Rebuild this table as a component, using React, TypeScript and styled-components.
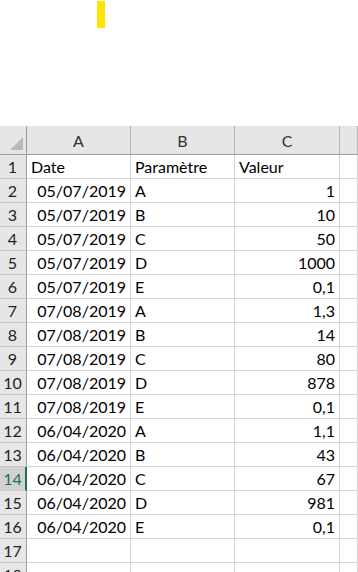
import React from 'react';
import styled, { createGlobalStyle } from 'styled-components';

const GlobalStyle = createGlobalStyle`
  html, body {
    margin: 0;
    padding: 0;
    background: #ffffff;
    overflow: hidden;
  }
  body {
    font-family: 'Lato', 'Liberation Sans', sans-serif;
  }
`;

const Page = styled.div`
  width: 358px;
  height: 572px;
  overflow: hidden;
  display: flex;
  flex-direction: column;
`;

const TopArea = styled.div`
  flex: none;
  height: 126px;
  padding-left: 97px;
  padding-top: 1px;
  box-sizing: border-box;
`;

const Marker = styled.div`
  width: 8px;
  height: 27px;
  background: #ffe300;
`;

const Sheet = styled.div`
  flex: none;
  display: grid;
  grid-template-columns: 27px 104px 104px 105px 1fr;
  grid-auto-rows: 24px;
  grid-template-rows: 29px;
  font-size: 16px;
  color: #000;
`;

const Corner = styled.div`
  background: #e6e6e6;
  border-right: 1px solid #9e9e9e;
  border-bottom: 1px solid #9e9e9e;
  display: flex;
  align-items: flex-end;
  justify-content: flex-end;
  padding: 0 3px 4px 0;
  box-sizing: border-box;
`;

const ColHeader = styled.div`
  background: #e6e6e6;
  border-right: 1px solid #b4b4b4;
  border-bottom: 1px solid #9e9e9e;
  color: #333;
  display: flex;
  align-items: center;
  justify-content: center;
  box-sizing: border-box;
  padding-top: 1px;
`;

const RowHeader = styled.div<{ $active?: boolean }>`
  background: ${(p) => (p.$active ? '#d2d2d2' : '#e6e6e6')};
  color: ${(p) => (p.$active ? '#217346' : '#222')};
  border-right: ${(p) => (p.$active ? '2px solid #217346' : '1px solid #9e9e9e')};
  border-bottom: 1px solid #c8c8c8;
  display: flex;
  align-items: center;
  justify-content: center;
  box-sizing: border-box;
  padding-right: ${(p) => (p.$active ? '0' : '1px')};
`;

const Cell = styled.div<{ $align?: 'left' | 'right' }>`
  border-right: 1px solid #d4d4d4;
  border-bottom: 1px solid #d4d4d4;
  display: flex;
  align-items: center;
  justify-content: ${(p) => (p.$align === 'right' ? 'flex-end' : 'flex-start')};
  padding: 0 4px 0 4px;
  white-space: nowrap;
  overflow: hidden;
  box-sizing: border-box;
`;

const rows: [string, string, string][] = [
  ['05/07/2019', 'A', '1'],
  ['05/07/2019', 'B', '10'],
  ['05/07/2019', 'C', '50'],
  ['05/07/2019', 'D', '1000'],
  ['05/07/2019', 'E', '0,1'],
  ['07/08/2019', 'A', '1,3'],
  ['07/08/2019', 'B', '14'],
  ['07/08/2019', 'C', '80'],
  ['07/08/2019', 'D', '878'],
  ['07/08/2019', 'E', '0,1'],
  ['06/04/2020', 'A', '1,1'],
  ['06/04/2020', 'B', '43'],
  ['06/04/2020', 'C', '67'],
  ['06/04/2020', 'D', '981'],
  ['06/04/2020', 'E', '0,1'],
];

const CornerMark = () => (
  <svg width="13" height="13" viewBox="0 0 13 13">
    <polygon points="13,0 13,13 0,13" fill="#b8b8b8" />
  </svg>
);

export default function App() {
  return (
    <Page>
      <GlobalStyle />
      <TopArea>
        <Marker />
      </TopArea>
      <Sheet>
        <Corner>
          <CornerMark />
        </Corner>
        <ColHeader>A</ColHeader>
        <ColHeader>B</ColHeader>
        <ColHeader>C</ColHeader>
        <ColHeader />

        <RowHeader>1</RowHeader>
        <Cell>Date</Cell>
        <Cell>Paramètre</Cell>
        <Cell>Valeur</Cell>
        <Cell />

        {rows.map(([date, param, value], i) => (
          <React.Fragment key={i}>
            <RowHeader $active={i + 2 === 14}>{i + 2}</RowHeader>
            <Cell $align="right">{date}</Cell>
            <Cell>{param}</Cell>
            <Cell $align="right">{value}</Cell>
            <Cell />
          </React.Fragment>
        ))}

        {[17, 18].map((n) => (
          <React.Fragment key={n}>
            <RowHeader>{n}</RowHeader>
            <Cell />
            <Cell />
            <Cell />
            <Cell />
          </React.Fragment>
        ))}
      </Sheet>
    </Page>
  );
}
